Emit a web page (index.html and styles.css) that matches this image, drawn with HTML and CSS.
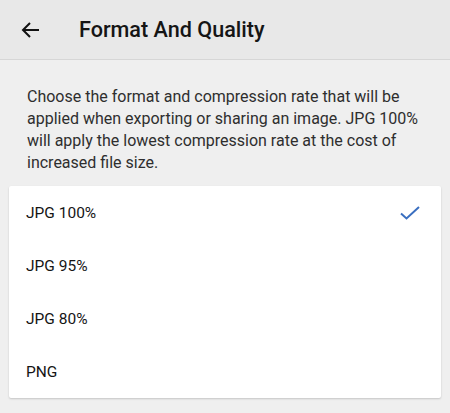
FILE: index.html
```html
<!DOCTYPE html>
<html>
<head>
<meta charset="utf-8">
<link rel="stylesheet" href="styles.css">
</head>
<body>
<header class="appbar">
  <svg class="back" width="24" height="24" viewBox="0 0 24 24"><path d="M20 12H5M11 5l-7 7 7 7" fill="none" stroke="#111" stroke-width="2"/></svg>
  <h1 class="title">Format And Quality</h1>
</header>
<main class="content">
  <p class="desc">Choose the format and compression rate that will be applied when exporting or sharing an image. JPG 100% will apply the lowest compression rate at the cost of increased file size.</p>
  <ul class="card">
    <li class="row"><span>JPG 100%</span><svg class="check" width="22" height="16" viewBox="0 0 22 16"><path d="M2 8.5l5.5 5L20 2" fill="none" stroke="#3a6fc0" stroke-width="2"/></svg></li>
    <li class="row"><span>JPG 95%</span></li>
    <li class="row"><span>JPG 80%</span></li>
    <li class="row"><span>PNG</span></li>
  </ul>
</main>
</body>
</html>
```
FILE: styles.css
```css
html, body { margin: 0; padding: 0; }
body {
  background: #efefef;
  font-family: Roboto, "Noto Sans", sans-serif;
  width: 450px;
  height: 413px;
  overflow: hidden;
}
.appbar {
  height: 60px;
  box-sizing: border-box;
  background: #e8e8e8;
  border-bottom: 1px solid #d6d6d6;
  display: flex;
  align-items: center;
  padding-left: 19px;
}
.back { flex: none; }
.title {
  margin: 0 0 0 36px;
  font-size: 21.6px;
  font-weight: 500;
  color: #151515;
}
.content { padding: 26px 9px 0 9px; }
.desc {
  margin: 0 0 0 18px;
  font-size: 16px;
  line-height: 22px;
  color: #2e2e2e;
  width: 400px;
}
.card {
  list-style: none;
  margin: 12px 0 0 0;
  padding: 0;
  background: #fff;
  border-radius: 2px;
  box-shadow: 0 1px 2px rgba(0,0,0,0.18);
}
.row {
  height: 53px;
  display: flex;
  align-items: center;
  justify-content: space-between;
  padding: 0 20px 0 17px;
  font-size: 15.5px;
  color: #151515;
}
.check { flex: none; }
```
